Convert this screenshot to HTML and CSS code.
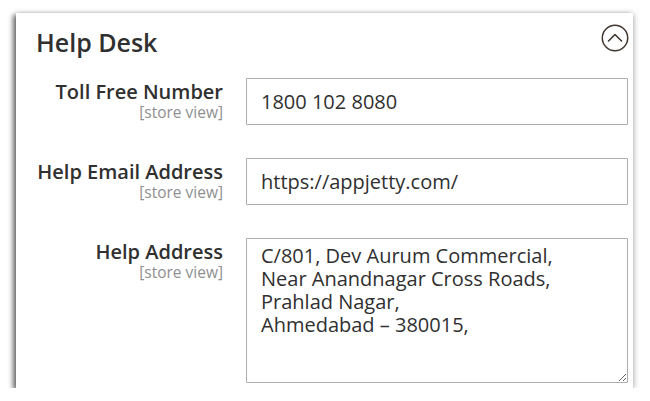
FILE: index.html
```html
<!DOCTYPE html>
<html>
<head>
<meta charset="utf-8">
<link rel="stylesheet" href="styles.css">
</head>
<body>
<div class="card">
  <div class="head">
    <h2 class="title">Help Desk</h2>
    <svg class="toggle" width="28" height="28" viewBox="0 0 28 28">
      <circle cx="14" cy="14" r="12.7" fill="none" stroke="#41362f" stroke-width="1.5"/>
      <path d="M7.5 17 L14 10.5 L20.5 17" fill="none" stroke="#41362f" stroke-width="1.6" stroke-linecap="round" stroke-linejoin="round"/>
    </svg>
  </div>
  <div class="rows">
    <div class="label"><div class="name">Toll Free Number</div><div class="scope">[store view]</div></div>
    <input class="field" type="text" value="1800 102 8080">
    <div class="label"><div class="name">Help Email Address</div><div class="scope">[store view]</div></div>
    <input class="field" type="text" value="https://appjetty.com/">
    <div class="label"><div class="name">Help Address</div><div class="scope">[store view]</div></div>
    <textarea class="field area">C/801, Dev Aurum Commercial,
Near Anandnagar Cross Roads,
Prahlad Nagar,
Ahmedabad – 380015,</textarea>
  </div>
</div>
</body>
</html>
```
FILE: styles.css
```css
html, body {
  margin: 0;
  padding: 0;
  background: #ffffff;
}
body {
  font-family: "Open Sans", "Liberation Sans", sans-serif;
  color: #303030;
}
.card {
  box-sizing: border-box;
  margin: 13px 17px 0 16px;
  width: 617px;
  height: 375px;
  background: #fff;
  box-shadow: -3px 2px 5px rgba(0,0,0,0.55), 1px 1px 6px rgba(0,0,0,0.25);
  padding: 13.5px 5px 0 20px;
}
.head {
  display: flex;
  justify-content: space-between;
  align-items: flex-start;
  height: 30px;
}
.title {
  margin: 0;
  font-size: 25px;
  line-height: 30px;
  font-weight: 600;
  color: #303030;
}
.toggle {
  margin-top: -2.5px;
  margin-right: -1px;
}
.rows {
  margin-top: 21.5px;
  display: grid;
  grid-template-columns: 187px 1fr;
  column-gap: 23px;
  row-gap: 33px;
}
.label {
  text-align: right;
  padding-top: 2px;
}
.name {
  font-size: 20px;
  line-height: 24px;
  font-weight: 600;
  color: #303030;
}
.scope {
  font-size: 15.5px;
  line-height: 17px;
  color: #8f8f8f;
}
.field {
  box-sizing: border-box;
  width: 100%;
  height: 47px;
  margin: 0;
  border: 1px solid #adadad;
  border-radius: 1px;
  padding: 0 14px;
  font-family: "Open Sans", "Liberation Sans", sans-serif;
  font-size: 20px;
  color: #303030;
  background: #fff;
  outline: none;
}
.area {
  height: 145px;
  padding: 4.5px 14px;
  line-height: 23.3px;
  resize: both;
  overflow: hidden;
}
```
